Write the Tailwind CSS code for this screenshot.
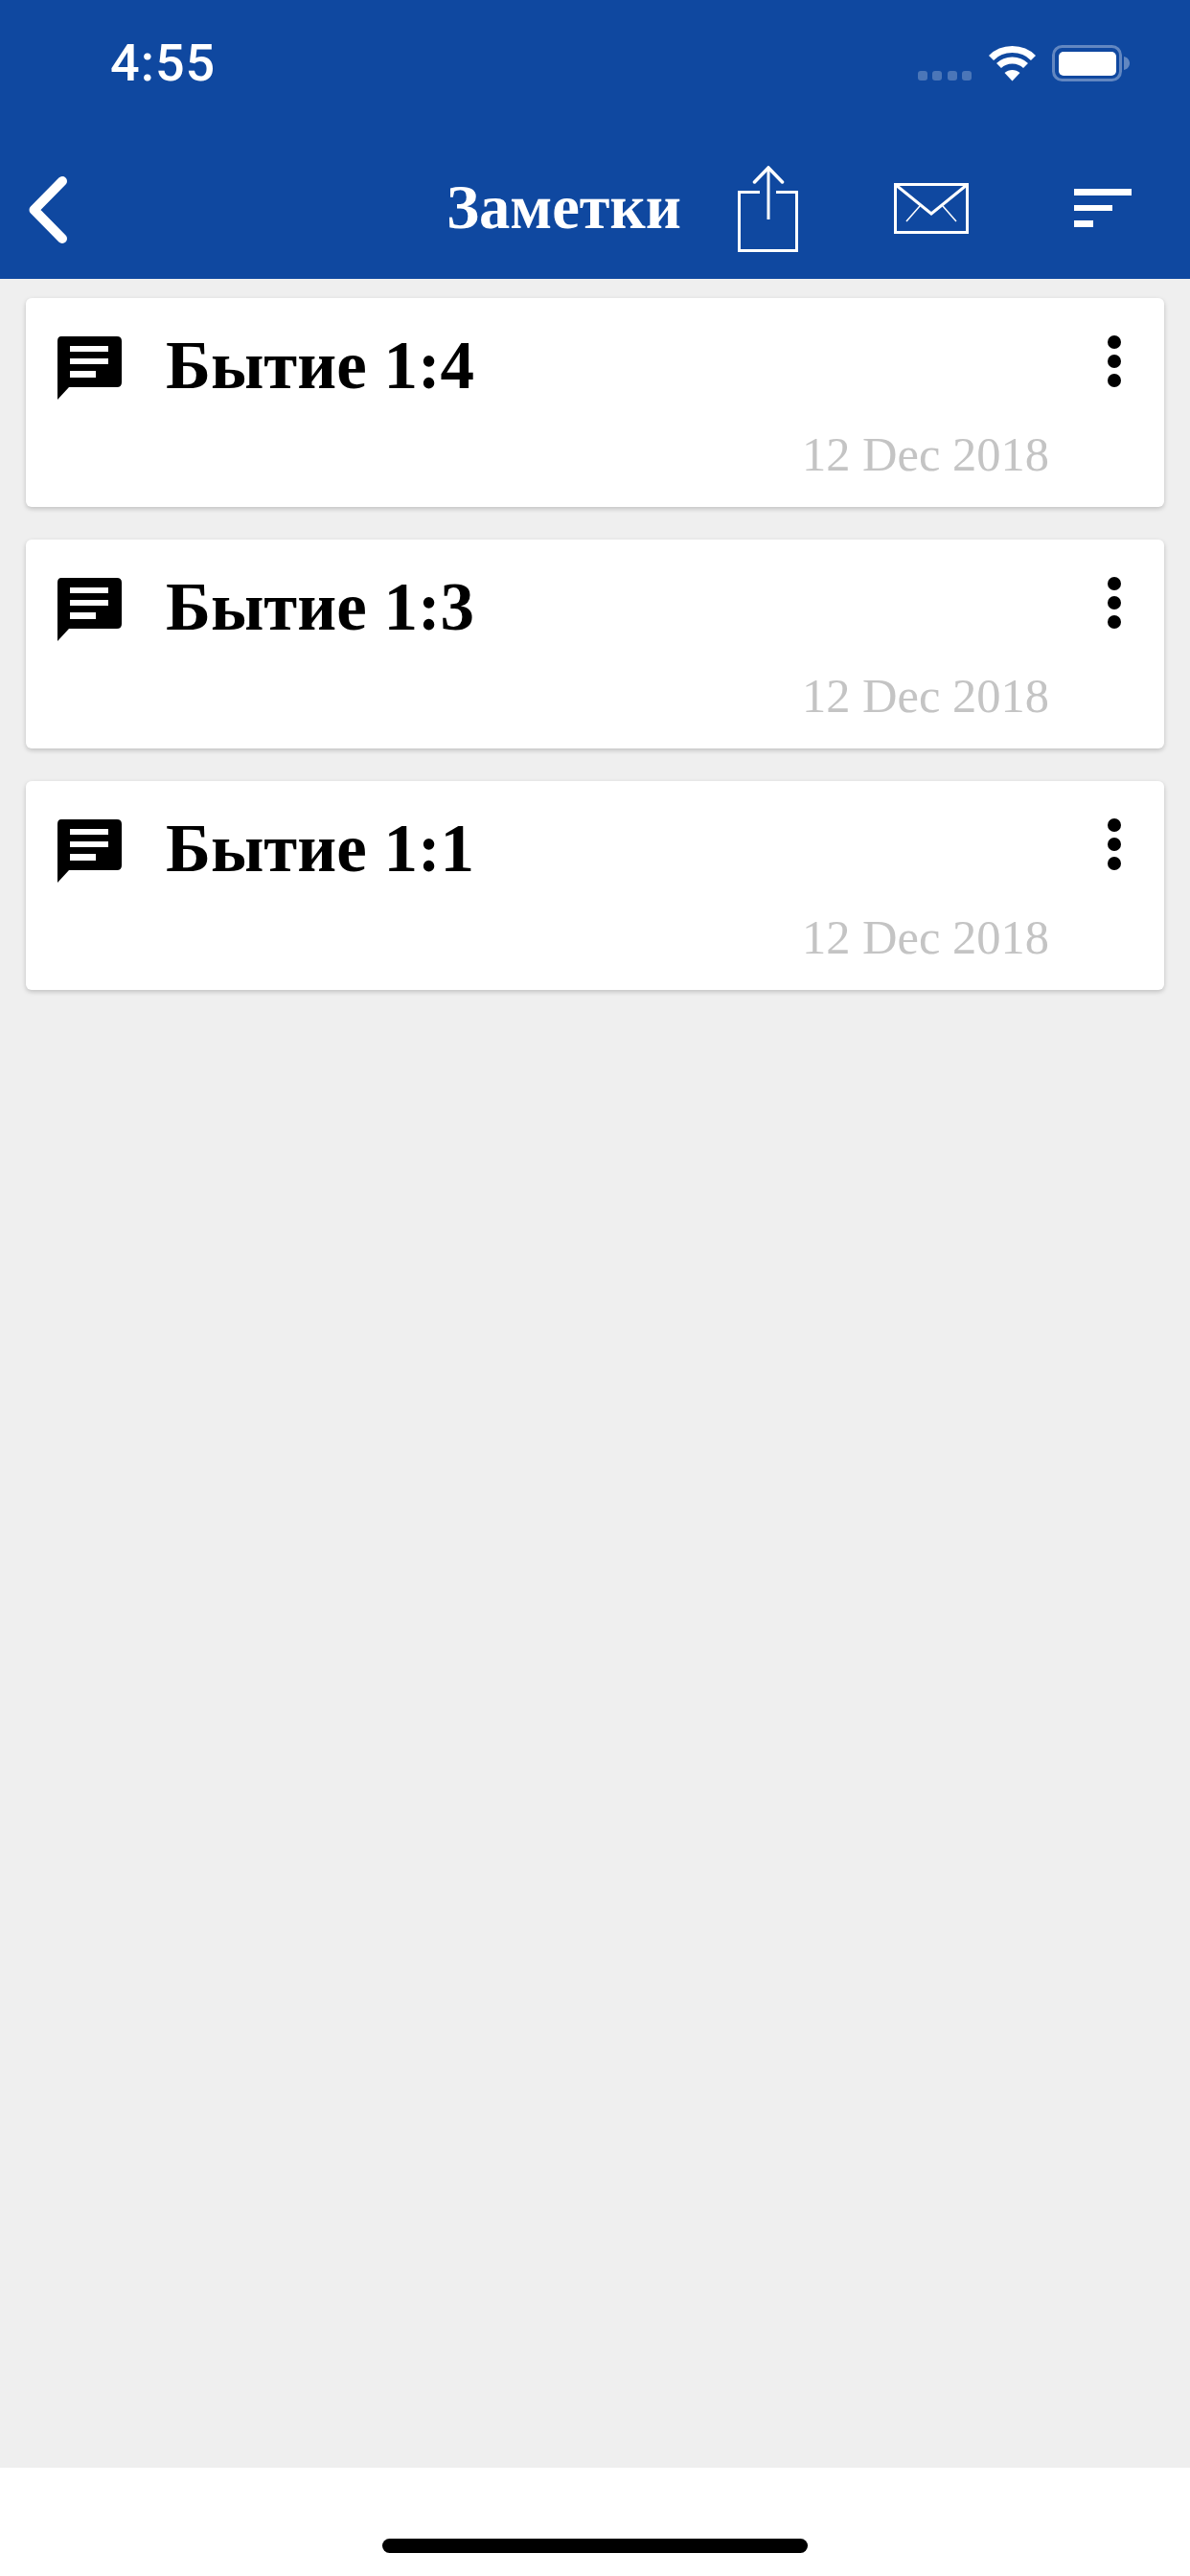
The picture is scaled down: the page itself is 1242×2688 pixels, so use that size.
<!DOCTYPE html>
<html lang="ru">
<head>
<meta charset="utf-8">
<script src="https://cdn.jsdelivr.net/npm/@tailwindcss/browser@4"></script>
<title>Заметки</title>
</head>
<body class="m-0">
<div class="w-[1242px] h-[2688px] flex flex-col bg-[#efefef] overflow-hidden font-['Liberation_Serif',serif]">
  <header class="h-[291px] shrink-0 bg-[#0f48a0] flex flex-col text-white">
    <div class="h-[100px] flex items-start">
      <span class="ml-[115px] mt-[36px] text-[54px] leading-[60px] font-medium tracking-[1px] font-['Roboto',sans-serif]">4:55</span>
      <div class="ml-auto mr-[63px] mt-[47px] flex items-start">
        <div class="mt-[27px] flex gap-[5.5px]">
          <span class="w-[10px] h-[10px] rounded-[3px] bg-white/25"></span>
          <span class="w-[10px] h-[10px] rounded-[3px] bg-white/25"></span>
          <span class="w-[10px] h-[10px] rounded-[3px] bg-white/25"></span>
          <span class="w-[10px] h-[10px] rounded-[3px] bg-white/25"></span>
        </div>
        <svg class="ml-[18px]" width="49" height="38" viewBox="0 0 49 38" fill="none" stroke="#fff" stroke-width="7">
          <path d="M2.5 13.5 C14 1.5 35 1.5 46.5 13.5"/>
          <path d="M10.5 21.5 C18 14 31 14 38.5 21.5"/>
          <path d="M24.5 37.5 L16.5 29 C21 25 28 25 32.5 29 Z" fill="#fff" stroke="none"/>
        </svg>
        <svg class="ml-[17px]" width="81" height="38" viewBox="0 0 81 38" fill="none">
          <rect x="1.5" y="1.5" width="70" height="35" rx="9" stroke="#fff" stroke-opacity="0.35" stroke-width="3"/>
          <rect x="7" y="7" width="60" height="25" rx="5" fill="#fff"/>
          <path d="M75 12 C79 13 81 16 81 19 C81 22 79 25 75 26 Z" fill="#fff" fill-opacity="0.35"/>
        </svg>
      </div>
    </div>
    <nav class="h-[191px] flex items-start">
      <svg class="ml-[30px] mt-[84px] shrink-0" width="41" height="70" viewBox="0 0 41 70" fill="none" stroke="#fff" stroke-width="10" stroke-linecap="round" stroke-linejoin="round">
        <path d="M35 5 L5.5 35 L35 65"/>
      </svg>
      <h1 class="ml-[395px] mt-[82px] text-[64.5px] leading-[70px] font-bold whitespace-nowrap">Заметки</h1>
      <svg class="ml-[59px] mt-[73px] shrink-0" width="63" height="90" viewBox="0 0 63 90" fill="none" stroke="#fff">
        <path d="M23 27.5 H1.5 V88.5 H61.5 V27.5 H40" stroke-width="3"/>
        <path d="M32 3 V56" stroke-width="3"/>
        <path d="M17.5 17 L32 2 L46.5 17" stroke-width="3.5" stroke-linecap="round"/>
      </svg>
      <svg class="ml-[100px] mt-[91px] shrink-0" width="78" height="53" viewBox="0 0 78 53" fill="none" stroke="#fff">
        <rect x="1.5" y="1.5" width="75" height="50" stroke-width="3"/>
        <path d="M2 2 L39 32 L76 2" stroke-width="3"/>
        <path d="M27 24 L13 40 M51 24 L65 40" stroke-width="1.5"/>
      </svg>
      <div class="ml-[110px] mt-[97px] flex flex-col gap-[10px]">
        <span class="block w-[60px] h-[7px] bg-white"></span>
        <span class="block w-[40px] h-[6px] bg-white"></span>
        <span class="block w-[20px] h-[7px] bg-white"></span>
      </div>
    </nav>
  </header>

  <main class="flex-1 flex flex-col gap-[34px] px-[27px] pt-[20px]">
    <article class="h-[218px] bg-white rounded-[6px] shadow-[0_2px_5px_rgba(0,0,0,0.2)] flex flex-col">
      <div class="flex items-start h-[131px]">
        <svg class="ml-[32px] mt-[40px] shrink-0" width="68" height="66" viewBox="0 0 68 66">
          <path fill="#000" fill-rule="evenodd" d="M5 0 H63 Q68 0 68 5 V48 Q68 53 63 53 H13 L1 66 V5 Q1 0 5 0 Z M14 10 V16 H54 V10 Z M14 23 V29 H54 V23 Z M14 36 V43 H41 V36 Z"/>
        </svg>
        <h2 class="ml-[46px] mt-[30px] text-[71px] leading-[80px] font-bold text-black whitespace-nowrap">Бытие 1:4</h2>
        <div class="ml-auto mr-[45px] mt-[39px] flex flex-col gap-[6px]">
          <span class="block w-[14px] h-[14px] rounded-full bg-black"></span>
          <span class="block w-[14px] h-[14px] rounded-full bg-black"></span>
          <span class="block w-[14px] h-[14px] rounded-full bg-black"></span>
        </div>
      </div>
      <p class="mt-[4px] mr-[120px] text-right text-[50.5px] leading-[56px] text-[#c4c4c4]">12 Dec 2018</p>
    </article>
    <article class="h-[218px] bg-white rounded-[6px] shadow-[0_2px_5px_rgba(0,0,0,0.2)] flex flex-col">
      <div class="flex items-start h-[131px]">
        <svg class="ml-[32px] mt-[40px] shrink-0" width="68" height="66" viewBox="0 0 68 66">
          <path fill="#000" fill-rule="evenodd" d="M5 0 H63 Q68 0 68 5 V48 Q68 53 63 53 H13 L1 66 V5 Q1 0 5 0 Z M14 10 V16 H54 V10 Z M14 23 V29 H54 V23 Z M14 36 V43 H41 V36 Z"/>
        </svg>
        <h2 class="ml-[46px] mt-[30px] text-[71px] leading-[80px] font-bold text-black whitespace-nowrap">Бытие 1:3</h2>
        <div class="ml-auto mr-[45px] mt-[39px] flex flex-col gap-[6px]">
          <span class="block w-[14px] h-[14px] rounded-full bg-black"></span>
          <span class="block w-[14px] h-[14px] rounded-full bg-black"></span>
          <span class="block w-[14px] h-[14px] rounded-full bg-black"></span>
        </div>
      </div>
      <p class="mt-[4px] mr-[120px] text-right text-[50.5px] leading-[56px] text-[#c4c4c4]">12 Dec 2018</p>
    </article>
    <article class="h-[218px] bg-white rounded-[6px] shadow-[0_2px_5px_rgba(0,0,0,0.2)] flex flex-col">
      <div class="flex items-start h-[131px]">
        <svg class="ml-[32px] mt-[40px] shrink-0" width="68" height="66" viewBox="0 0 68 66">
          <path fill="#000" fill-rule="evenodd" d="M5 0 H63 Q68 0 68 5 V48 Q68 53 63 53 H13 L1 66 V5 Q1 0 5 0 Z M14 10 V16 H54 V10 Z M14 23 V29 H54 V23 Z M14 36 V43 H41 V36 Z"/>
        </svg>
        <h2 class="ml-[46px] mt-[30px] text-[71px] leading-[80px] font-bold text-black whitespace-nowrap">Бытие 1:1</h2>
        <div class="ml-auto mr-[45px] mt-[39px] flex flex-col gap-[6px]">
          <span class="block w-[14px] h-[14px] rounded-full bg-black"></span>
          <span class="block w-[14px] h-[14px] rounded-full bg-black"></span>
          <span class="block w-[14px] h-[14px] rounded-full bg-black"></span>
        </div>
      </div>
      <p class="mt-[4px] mr-[120px] text-right text-[50.5px] leading-[56px] text-[#c4c4c4]">12 Dec 2018</p>
    </article>
  </main>

  <footer class="h-[113px] shrink-0 bg-white flex justify-center">
    <span class="mt-[74px] w-[444px] h-[15px] rounded-full bg-black"></span>
  </footer>
</div>
</body>
</html>
